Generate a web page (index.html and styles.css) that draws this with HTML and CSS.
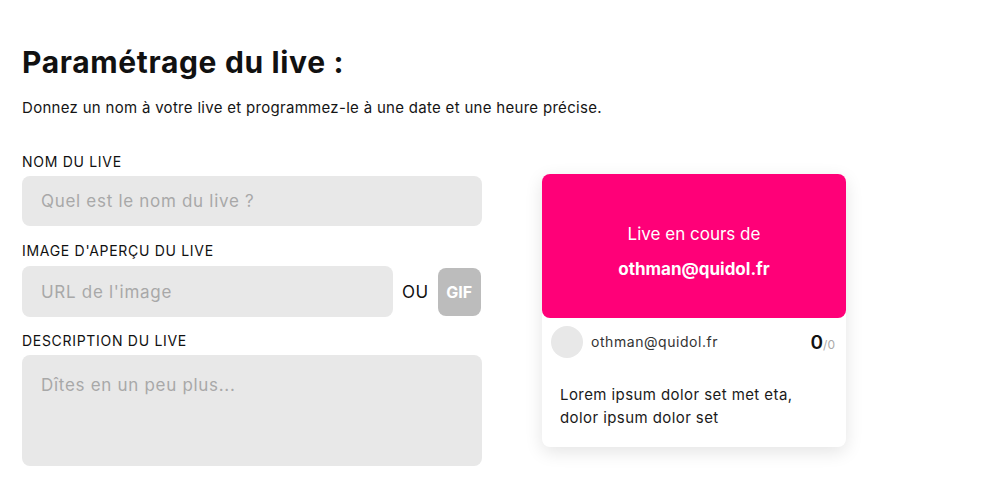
FILE: index.html
```html
<!doctype html>
<html>
  <head>
    <title>Paramétrage du live</title>
    <link rel="stylesheet" href="styles.css">
  </head>
  <body>
    <main class="page">
      <h1 class="title">Paramétrage du live :</h1>
      <p class="intro">Donnez un nom à votre live et programmez-le à une date et une heure précise.</p>

      <div class="layout">
        <form class="form">
          <label class="field_label" for="name">NOM DU LIVE</label>
          <input class="field" type="text" id="name" placeholder="Quel est le nom du live ?">

          <label class="field_label" for="image">IMAGE D'APERÇU DU LIVE</label>
          <div class="image_row">
            <input class="field" type="text" id="image" placeholder="URL de l'image">
            <span class="or">OU</span>
            <button class="gif" type="button">GIF</button>
          </div>

          <label class="field_label" for="description">DESCRIPTION DU LIVE</label>
          <textarea class="field area" id="description" placeholder="Dîtes en un peu plus..."></textarea>
        </form>

        <aside class="card">
          <div class="card_cover">
            <div class="cover_line">Live en cours de</div>
            <div class="cover_line cover_host">othman@quidol.fr</div>
          </div>
          <div class="card_meta">
            <div class="avatar"></div>
            <div class="host">othman@quidol.fr</div>
            <div class="count">0<span class="count_total">/0</span></div>
          </div>
          <p class="card_text">Lorem ipsum dolor set met eta,<br>dolor ipsum dolor set</p>
        </aside>
      </div>
    </main>
  </body>
</html>
```

FILE: styles.css
```css
body {
  margin: 0;
  background: #fff;
  color: #111;
  font-family: "Inter", "Noto Sans", sans-serif;
}

.page {
  padding: 42px 22px 0 22px;
}

.title {
  margin: 0;
  font-size: 30px;
  line-height: 40px;
  font-weight: 700;
  letter-spacing: 0.65px;
}

.intro {
  margin: 16px 0 0 0;
  font-size: 15px;
  line-height: 20px;
  letter-spacing: 0.3px;
  color: #151515;
}

.layout {
  display: flex;
  gap: 60px;
  margin-top: 35px;
}

.form {
  width: 460px;
  display: flex;
  flex-direction: column;
}

.field_label {
  font-size: 14px;
  line-height: 18px;
  letter-spacing: 0.7px;
  color: #111;
  margin-bottom: 5px;
}

.field {
  box-sizing: border-box;
  height: 50px;
  width: 100%;
  border: none;
  border-radius: 8px;
  background: #e8e8e8;
  padding: 0 19px;
  font-family: inherit;
  font-size: 17px;
  letter-spacing: 0.7px;
  margin-bottom: 16px;
  outline: none;
}

.field::placeholder {
  color: #a8a8a8;
}

.image_row {
  display: flex;
  align-items: center;
  margin-top: 1px;
  margin-bottom: 15px;
}

.image_row .field {
  width: 371px;
  height: 51px;
  margin-bottom: 0;
}

.or {
  margin-left: 9px;
  font-size: 17px;
  letter-spacing: 0.5px;
  color: #111;
}

.gif {
  margin-left: 9px;
  width: 43px;
  height: 48px;
  border: none;
  border-radius: 8px;
  background: #bcbcbc;
  color: #fff;
  font-family: inherit;
  font-size: 16px;
  font-weight: 700;
  padding: 0;
}

.area {
  height: 111px;
  padding-top: 20px;
  resize: none;
}

.card {
  margin-top: 21px;
  width: 304px;
  height: 273px;
  border-radius: 8px;
  background: #fff;
  box-shadow: 0 5px 18px rgba(0, 0, 0, 0.11);
  display: flex;
  flex-direction: column;
}

.card_cover {
  height: 144px;
  border-radius: 8px;
  background: #ff0078;
  color: #fff;
  display: flex;
  flex-direction: column;
  align-items: center;
  justify-content: center;
  gap: 12px;
  padding-top: 12px;
  box-sizing: border-box;
}

.cover_line {
  font-size: 17px;
  line-height: 23px;
}

.cover_host {
  font-weight: 700;
}

.card_meta {
  display: flex;
  align-items: center;
  padding: 8px 11px 0 9px;
}

.avatar {
  width: 32px;
  height: 32px;
  border-radius: 50%;
  background: #e8e8e8;
}

.host {
  margin-left: 8px;
  font-size: 14px;
  letter-spacing: 0.55px;
  color: #333;
  flex: 1;
  margin-top: -2px;
}

.count {
  font-size: 19px;
  font-weight: 600;
  color: #111;
}

.count_total {
  font-size: 12px;
  font-weight: 400;
  color: #aaa;
}

.card_text {
  margin: 25px 18px 0 18px;
  font-size: 15px;
  line-height: 23px;
  letter-spacing: 0.42px;
  color: #1a1a1a;
}
```
